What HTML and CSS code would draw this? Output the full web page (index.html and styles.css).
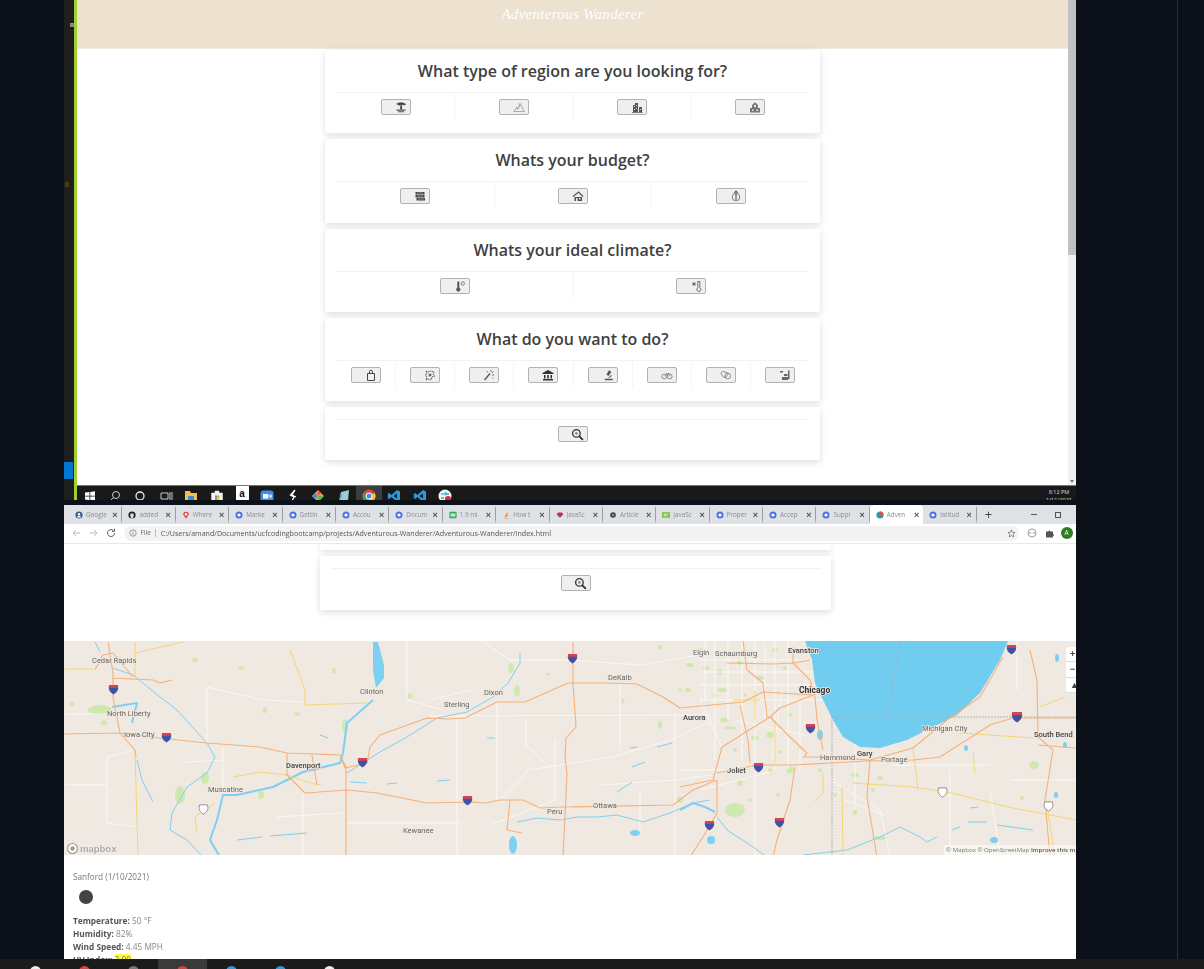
FILE: index.html
```html
<!DOCTYPE html>
<html lang="en">
<head>
<meta charset="utf-8">
<title>Adventerous Wanderer</title>
<link rel="stylesheet" href="styles.css">
</head>
<body>
<svg class="defs" width="0" height="0" aria-hidden="true">
  <defs>
    <symbol id="i-shield" viewBox="0 0 10 10"><path d="M1 1h8c.6 3 .5 6-4 8.500C.5 7 .4 4 1 1z" fill="#3f51a8"/><path d="M1 1h8l.1 2.300H.9z" fill="#d9434f"/></symbol>
    <symbol id="i-us" viewBox="0 0 10 10"><path d="M1.500 .8h7c1 3 .8 6-3.500 8.400C.7 6.800.5 3.800 1.500 .8z" fill="#fff" stroke="#777" stroke-width=".7"/></symbol>
    <symbol id="i-blue" viewBox="0 0 10 10"><circle cx="5" cy="5" r="4.400" fill="#4f6ee8"/><circle cx="5" cy="5" r="2" fill="#fff"/></symbol>
  </defs>
</svg>
<div class="screen">
  <div class="gutter-left"></div>
  <main class="stack">

    <section class="win-top">
      <div class="strip">
        <span class="strip-tick"></span>
        <span class="strip-dot"></span>
        <span class="strip-blue"></span>
      </div>
      <div class="green"></div>
      <div class="top-col">
        <div class="top-view">
          <div class="top-page">
            <header class="hero"><p class="brand">Adventerous Wanderer</p></header>
            <div class="quiz">
              <div class="card">
                <h2>What type of region are you looking for?</h2>
                <div class="row">
                  <div class="cell"><button class="btn" type="button"><svg class="ico" viewBox="0 0 12 12"><path d="M1 3.200C3 .8 9 .8 11 3.200L9.300 4.500 8 3.600 6.800 4.800 5.500 3.800 4 4.700 2.700 3.600zM5.200 4.500h1.500L7.300 8.500H5.200z" fill="#444"/><path d="M1.500 8.500h9v1.300h-9zM3 10.300h6v1H3z" fill="#555"/></svg></button></div>
                  <div class="cell"><button class="btn" type="button"><svg class="ico" viewBox="0 0 12 12"><path d="M.8 10.500 4 6l1.200 1.500L7 2.500l4.200 8zM7 2.500 6.500 6M4 6l.5 3" fill="none" stroke="#999" stroke-width=".8"/></svg></button></div>
                  <div class="cell"><button class="btn" type="button"><svg class="ico" viewBox="0 0 12 12"><path d="M2 11V4h2V2h3v9zM8 11V6h3v5zM1 11h10.500v.8H1z" fill="#555"/><path d="M3 5h1v1H3zM5 4h1v1H5zM3 8h1v1H3zM5 7h1v1H5zM9 8h1v1H9z" fill="#ddd"/></svg></button></div>
                  <div class="cell"><button class="btn" type="button"><svg class="ico" viewBox="0 0 12 12"><path d="M6 1.200 9 4v3H3V4zM1 7h10v4.500H1z" fill="#777"/><path d="M5 4h2v2H5zM3 8.500h1.500V10H3zM7.500 8.500H9V10H7.500z" fill="#eee"/></svg></button></div>
                </div>
              </div>
              <div class="card">
                <h2>Whats your budget?</h2>
                <div class="row">
                  <div class="cell"><button class="btn" type="button"><svg class="ico" viewBox="0 0 12 12"><path d="M1.500 2h9v2.500h-9zM1.500 5h9v2.500h-9zM2.500 8h8.500v2.500H2.500z" fill="#444"/><path d="M3 3h6M3 6h6M4 9h6" stroke="#ccc" stroke-width=".5"/></svg></button></div>
                  <div class="cell"><button class="btn" type="button"><svg class="ico" viewBox="0 0 12 12"><path d="M1 6.500 6.500 2 11 6.500" fill="none" stroke="#555" stroke-width="1.200"/><path d="M2.500 7h7.500v4H2.500z" fill="#555"/><path d="M4 8h1.500v3H4zM7 8h1.500v1.500H7z" fill="#eee"/></svg></button></div>
                  <div class="cell"><button class="btn" type="button"><svg class="ico" viewBox="0 0 12 12"><circle cx="6" cy="7" r="3.800" fill="none" stroke="#777" stroke-width=".9"/><path d="M6 1v9M4 2.800 6 .8l2 2" fill="none" stroke="#444" stroke-width="1"/></svg></button></div>
                </div>
              </div>
              <div class="card">
                <h2>Whats your ideal climate?</h2>
                <div class="row">
                  <div class="cell"><button class="btn" type="button"><svg class="ico" viewBox="0 0 12 12"><path d="M3.300 1.500h2v6.300a2 2 0 1 1-2 0z" fill="#555"/><circle cx="8.800" cy="3.500" r="1.700" fill="none" stroke="#666" stroke-width=".8"/></svg></button></div>
                  <div class="cell"><button class="btn" type="button"><svg class="ico" viewBox="0 0 12 12"><path d="M2 4h4M4 2v4M2.600 2.600l2.800 2.800M5.400 2.600 2.600 5.400" stroke="#555" stroke-width=".7"/><path d="M7.800 1.500h2v6.300a2 2 0 1 1-2 0z" fill="none" stroke="#555" stroke-width=".8"/></svg></button></div>
                </div>
              </div>
              <div class="card">
                <h2>What do you want to do?</h2>
                <div class="row">
                  <div class="cell"><button class="btn" type="button"><svg class="ico" viewBox="0 0 12 12"><path d="M2.500 4.500h7v7h-7zM4.500 4.500V2.800a1.500 1.500 0 0 1 3 0v1.700" fill="none" stroke="#333" stroke-width=".9"/></svg></button></div>
                  <div class="cell"><button class="btn" type="button"><svg class="ico" viewBox="0 0 12 12"><path d="M2 2l2 1 3-1 3 1-1 2 2 2-3 1-1 3-3-1-2 1 1-3-2-2 2-1z" fill="none" stroke="#555" stroke-width="1" stroke-dasharray="1.500 .7"/><circle cx="6" cy="6" r="1.500" fill="#666"/></svg></button></div>
                  <div class="cell"><button class="btn" type="button"><svg class="ico" viewBox="0 0 12 12"><path d="M1.500 11 7 4.500" stroke="#555" stroke-width="1.300"/><path d="M8 1v2M10.500 2.500 9 4M11 6H9M4 2l.8 1.500M9.500 8.500l.8 1" stroke="#666" stroke-width=".9"/></svg></button></div>
                  <div class="cell"><button class="btn" type="button"><svg class="ico" viewBox="0 0 12 12"><path d="M6 1 11.500 4v1H.5V4zM2 6h1.500v3.500H2zM5.200 6h1.600v3.500H5.200zM8.500 6H10v3.500H8.500zM1 10h10v1.500H1z" fill="#333"/></svg></button></div>
                  <div class="cell"><button class="btn" type="button"><svg class="ico" viewBox="0 0 12 12"><path d="M7 1.500 9 3 6.500 6.800 4.800 5.500zM3 11h7.500v-1H3zM6.500 8.500c2 0 3-1 3-2.500" fill="#555" stroke="#555" stroke-width=".5"/></svg></button></div>
                  <div class="cell"><button class="btn" type="button"><svg class="ico" viewBox="0 0 12 12"><circle cx="3.300" cy="7.500" r="2.400" fill="none" stroke="#666" stroke-width=".7"/><circle cx="8.700" cy="7.500" r="2.400" fill="none" stroke="#666" stroke-width=".7"/><path d="M3.300 7.500 5.500 4.500H8l.7 3M5.500 4.500l1 3" fill="none" stroke="#666" stroke-width=".6"/></svg></button></div>
                  <div class="cell"><button class="btn" type="button"><svg class="ico" viewBox="0 0 12 12"><path d="M1 4.500a2.200 2.200 0 0 1 4-1.200 2.200 2.200 0 0 1 3 2L5 9 2 6.500z" fill="none" stroke="#666" stroke-width=".7"/><circle cx="7.800" cy="7" r="2.800" fill="none" stroke="#666" stroke-width=".7"/></svg></button></div>
                  <div class="cell"><button class="btn" type="button"><svg class="ico" viewBox="0 0 12 12"><path d="M1 2h3v1.500H1zM9 1.500h1.500V10H9zM5 5h3.500v2H5zM3 8h6v3H3z" fill="#666"/></svg></button></div>
                </div>
              </div>
              <div class="card card-go">
                <button class="btn" type="button"><svg class="ico ico-go" viewBox="0 0 12 12"><circle cx="5" cy="5" r="3.500" fill="none" stroke="#333" stroke-width="1.200"/><circle cx="5" cy="5" r="1.200" fill="#888"/><path d="M7.500 7.500 11 11" stroke="#333" stroke-width="1.800"/></svg></button>
              </div>
            </div>
          </div>
          <div class="scroll"><span class="thumb"></span><span class="scroll-arrow"></span></div>
        </div>
        <footer class="taskbar">
          <span class="tb"><svg viewBox="0 0 14 14"><path d="M2 3.500 6.500 3v3.700H2zM7.300 3 12 2.300v4.400H7.300zM2 7.500h4.500v3.700L2 10.500zM7.300 7.500H12v4.400l-4.700-.7z" fill="#fff"/></svg></span>
          <span class="tb"><svg viewBox="0 0 14 14"><circle cx="8" cy="6" r="3.500" fill="none" stroke="#ccc"/><path d="M5.500 8.500 2 12" stroke="#ccc"/></svg></span>
          <span class="tb"><svg viewBox="0 0 14 14"><circle cx="7" cy="7" r="4" fill="none" stroke="#eee" stroke-width="1.300"/></svg></span>
          <span class="tb"><svg viewBox="0 0 14 14"><path d="M2 4h7v6H2zM11 3v8M13 3v8" fill="none" stroke="#ccc"/></svg></span>
          <span class="tb"><svg viewBox="0 0 14 14"><path d="M1 2h5l1 2h6v9H1z" fill="#f1c04a"/><path d="M4 7h6v4H4z" fill="#3a8fd0"/></svg></span>
          <span class="tb"><svg viewBox="0 0 14 14"><path d="M1.500 4h11v10h-11zM5 4V2h4v2" fill="#f2f2f2" stroke="#f2f2f2" stroke-width=".5"/><path d="M5 6.500h2v2H5z" fill="#e2543a"/><path d="M7.300 6.500h2v2h-2z" fill="#7cb62f"/><path d="M5 8.800h2v2H5z" fill="#2d9be0"/><path d="M7.300 8.800h2v2h-2z" fill="#f4b400"/></svg></span>
          <span class="tb tb-amazon">a</span>
          <span class="tb"><svg viewBox="0 0 14 14"><rect x=".5" y="1.500" width="13" height="12" rx="3" fill="#3d8df5"/><path d="M3 5h5.500v4.500H3zM9 7l2.500-2v4.500z" fill="#fff"/></svg></span>
          <span class="tb"><svg viewBox="0 0 14 14"><path d="M9 1 4.500 6 8 8l-3 6M9 1 6 6l4 2" fill="none" stroke="#fff" stroke-width="1.300"/></svg></span>
          <span class="tb"><svg viewBox="0 0 14 14"><path d="M7 1 13 7l-6 6-6-6z" fill="#e8a13a"/><path d="M7 1 10 4 7 7z" fill="#e5533d"/><path d="M1 7l3-3 3 3-3 3z" fill="#4c8be0"/><path d="M7 7h6l-6 6z" fill="#69b345"/></svg></span>
          <span class="tb"><svg viewBox="0 0 14 14"><path d="M4 3 12 1l-1 11-9 1z" fill="#9ccbd6"/><path d="M4 3 2 13l3-6z" fill="#6fa6b4"/></svg></span>
          <span class="tb tb-on"><svg viewBox="0 0 14 14"><circle cx="7" cy="7" r="6.500" fill="#dd4b3e"/><path d="M7 7 1.500 3.800A6.500 6.500 0 0 0 7 13.500z" fill="#3aa757"/><path d="M7 7l5.700-3A6.500 6.500 0 0 1 7 13.500z" fill="#f5c431"/><circle cx="7" cy="7" r="3" fill="#4285f4" stroke="#fff"/></svg></span>
          <span class="tb"><svg viewBox="0 0 14 14"><path d="M10 1 4.500 6 2 4 .8 5v4L2 10l2.500-2 5.500 5 3-1.500v-9zM10 4.500v5L6.500 7z" fill="#2a9ae0"/></svg></span>
          <span class="tb"><svg viewBox="0 0 14 14"><path d="M10 1 4.500 6 2 4 .8 5v4L2 10l2.500-2 5.500 5 3-1.500v-9zM10 4.500v5L6.500 7z" fill="#2a9ae0"/></svg></span>
          <span class="tb"><svg viewBox="0 0 14 14"><circle cx="7" cy="7" r="6.500" fill="#f4f4f4"/><path d="M3 5h3.500M7.500 3v3.500" stroke="#36c5f0" stroke-width="1.600"/><path d="M11 5H7.500M3 9h3" stroke="#2eb67d" stroke-width="1.600"/><circle cx="10" cy="10" r="3" fill="#d9264a"/></svg></span>
          <div class="clock"><span>8:12 PM</span><span>1/11/2021</span></div>
        </footer>
      </div>
    </section>

    <section class="win-bottom">
      <div class="tabs">
        <div class="tab"><svg class="fav" viewBox="0 0 10 10"><circle cx="5" cy="5" r="4.500" fill="#3b5b92"/><circle cx="5" cy="4" r="1.500" fill="#fff"/><path d="M2.500 8a2.500 2 0 0 1 5 0" fill="#fff"/></svg><span class="tab-t">Google</span><span class="tab-x">×</span></div>
        <div class="tab"><svg class="fav" viewBox="0 0 10 10"><circle cx="5" cy="5" r="4.500" fill="#222"/><path d="M3.500 9V7C2.500 6 2.500 4 3.500 3h3c1 1 1 3 0 4v2" fill="#dee1e6"/></svg><span class="tab-t">added</span><span class="tab-x">×</span></div>
        <div class="tab"><svg class="fav" viewBox="0 0 10 10"><path d="M5 9.800 1.500 4.500a3.500 3.500 0 1 1 7 0z" fill="#e4473c"/><circle cx="5" cy="4" r="1.500" fill="#fff"/></svg><span class="tab-t">Where</span><span class="tab-x">×</span></div>
        <div class="tab"><svg class="fav"><use href="#i-blue"/></svg><span class="tab-t">Marke</span><span class="tab-x">×</span></div>
        <div class="tab"><svg class="fav"><use href="#i-blue"/></svg><span class="tab-t">Gettin</span><span class="tab-x">×</span></div>
        <div class="tab"><svg class="fav"><use href="#i-blue"/></svg><span class="tab-t">Accou</span><span class="tab-x">×</span></div>
        <div class="tab"><svg class="fav"><use href="#i-blue"/></svg><span class="tab-t">Docum</span><span class="tab-x">×</span></div>
        <div class="tab"><svg class="fav" viewBox="0 0 10 10"><rect x=".5" y="1" width="9" height="8" rx="1" fill="#3aa75c"/><path d="M2 3h6v4H2z" fill="#bfe8c9"/></svg><span class="tab-t">1.9 mi</span><span class="tab-x">×</span></div>
        <div class="tab"><svg class="fav" viewBox="0 0 10 10"><path d="M7 .8 3 7.500h4zM2 9h6v.8H2z" fill="#e3984f"/></svg><span class="tab-t">How t</span><span class="tab-x">×</span></div>
        <div class="tab"><svg class="fav" viewBox="0 0 10 10"><path d="M5 8.500.8 4.500 2.500 2h5l1.700 2.500z" fill="#c2334d"/></svg><span class="tab-t">JavaSc</span><span class="tab-x">×</span></div>
        <div class="tab"><svg class="fav" viewBox="0 0 10 10"><circle cx="5" cy="5" r="3.500" fill="#444"/><circle cx="5" cy="5" r="1.300" fill="#aaa"/></svg><span class="tab-t">Article</span><span class="tab-x">×</span></div>
        <div class="tab"><svg class="fav" viewBox="0 0 10 10"><rect y="1.500" width="10" height="7" fill="#7cc243"/><path d="M2 3.500h6v1H2zM2 5.500h4v1H2z" fill="#fff"/></svg><span class="tab-t">JavaSc</span><span class="tab-x">×</span></div>
        <div class="tab"><svg class="fav"><use href="#i-blue"/></svg><span class="tab-t">Proper</span><span class="tab-x">×</span></div>
        <div class="tab"><svg class="fav"><use href="#i-blue"/></svg><span class="tab-t">Accep</span><span class="tab-x">×</span></div>
        <div class="tab"><svg class="fav"><use href="#i-blue"/></svg><span class="tab-t">Suppl</span><span class="tab-x">×</span></div>
        <div class="tab tab-on"><svg class="fav" viewBox="0 0 10 10"><circle cx="5" cy="5" r="4.500" fill="#2c9c9c"/><path d="M5 .5A4.500 4.500 0 0 1 9.500 5L5 5z" fill="#d9534f"/></svg><span class="tab-t">Adven</span><span class="tab-x">×</span></div>
        <div class="tab"><svg class="fav"><use href="#i-blue"/></svg><span class="tab-t">latitud</span><span class="tab-x">×</span></div>
        <span class="tab-new">+</span>
        <span class="win-min"></span>
        <span class="win-max"></span>
      </div>
      <div class="toolbar">
        <svg class="nav nav-off" viewBox="0 0 10 10"><path d="M9 5H2M5 2 2 5l3 3" fill="none" stroke="currentColor"/></svg>
        <svg class="nav nav-off" viewBox="0 0 10 10"><path d="M1 5h7M5 2l3 3-3 3" fill="none" stroke="currentColor"/></svg>
        <svg class="nav" viewBox="0 0 10 10"><path d="M8.500 5A3.500 3.500 0 1 1 7.300 2.400M8.500 .8v2.500H6" fill="none" stroke="currentColor"/></svg>
        <div class="omni">
          <svg class="omni-i" viewBox="0 0 10 10"><circle cx="5" cy="5" r="4" fill="none" stroke="#666" stroke-width=".8"/><path d="M5 4.500V7M5 3v.8" stroke="#666"/></svg>
          <span class="omni-file">File</span>
          <span class="omni-url">C:/Users/amand/Documents/ucfcodingbootcamp/projects/Adventurous-Wanderer/Adventurous-Wanderer/index.html</span>
          <svg class="omni-star" viewBox="0 0 10 10"><path d="M5 1l1.200 2.700 2.800.3-2.100 1.900.6 2.900L5 7.300 2.500 8.800l.6-2.900L1 4l2.800-.3z" fill="none" stroke="#666" stroke-width=".8"/></svg>
        </div>
        <svg class="tool" viewBox="0 0 10 10"><circle cx="5" cy="5" r="4" fill="none" stroke="#888" stroke-width=".8"/><path d="M3 4v2M7 4v2" stroke="#888"/></svg>
        <svg class="tool" viewBox="0 0 10 10"><path d="M1 3.500h2.500a1 1 0 0 1 2 0H8v2.500a1 1 0 0 1 0 2V9.500H1z" fill="#555"/></svg>
        <span class="avatar">A</span>
      </div>
      <div class="page">
        <div class="stub"></div>
        <div class="card-wide"><button class="btn" type="button"><svg class="ico ico-go" viewBox="0 0 12 12"><circle cx="5" cy="5" r="3.500" fill="none" stroke="#333" stroke-width="1.200"/><circle cx="5" cy="5" r="1.200" fill="#888"/><path d="M7.500 7.500 11 11" stroke="#333" stroke-width="1.800"/></svg></button></div>
        <div class="map">
          <svg class="map-art" viewBox="64 641 1012 214" preserveAspectRatio="none">
            <rect x="64" y="641" width="1012" height="214" fill="#efe9e1"/>
            <g fill="#cfe8b0">
              <ellipse cx="100" cy="710" rx="12" ry="5"/><ellipse cx="104" cy="723" rx="3" ry="2.500"/><ellipse cx="72" cy="704" rx="3" ry="2"/><ellipse cx="195" cy="660" rx="3" ry="2"/><ellipse cx="241" cy="668" rx="3" ry="2"/><ellipse cx="265" cy="710" rx="2" ry="3"/><ellipse cx="297" cy="714" rx="3" ry="2"/><ellipse cx="334" cy="671" rx="2" ry="3"/><ellipse cx="345" cy="726" rx="3" ry="7"/><ellipse cx="410" cy="696" rx="3" ry="2.500"/><ellipse cx="261" cy="795" rx="3" ry="4"/><ellipse cx="180" cy="795" rx="5" ry="9"/><ellipse cx="205" cy="778" rx="4" ry="6"/><ellipse cx="511" cy="668" rx="3" ry="5"/><ellipse cx="517" cy="691" rx="3" ry="6"/><ellipse cx="548" cy="674" rx="2" ry="1.500"/><ellipse cx="660" cy="647" rx="2" ry="2.500"/><ellipse cx="660" cy="725" rx="2" ry="4"/><ellipse cx="623" cy="701" rx="1.500" ry="2.500"/><ellipse cx="724" cy="720" rx="4" ry="2.500"/><ellipse cx="730" cy="728" rx="6" ry="1.500"/><ellipse cx="690" cy="665" rx="4" ry="2"/><ellipse cx="706" cy="668" rx="3" ry="2"/><ellipse cx="688" cy="690" rx="3" ry="2"/><ellipse cx="720" cy="672" rx="3" ry="3"/><ellipse cx="722" cy="690" rx="5" ry="2"/><ellipse cx="740" cy="662" rx="3" ry="3"/><ellipse cx="760" cy="678" rx="4" ry="2"/><ellipse cx="775" cy="650" rx="3" ry="2"/><ellipse cx="770" cy="735" rx="4" ry="3"/><ellipse cx="755" cy="738" rx="4" ry="2"/><ellipse cx="790" cy="770" rx="4" ry="3"/><ellipse cx="740" cy="783" rx="3" ry="3"/><ellipse cx="735" cy="810" rx="10" ry="7"/><ellipse cx="680" cy="800" rx="3" ry="3"/><ellipse cx="778" cy="795" rx="2" ry="2"/><ellipse cx="855" cy="775" rx="4" ry="2"/><ellipse cx="880" cy="778" rx="3" ry="2"/><ellipse cx="873" cy="790" rx="2" ry="2"/><ellipse cx="1034" cy="765" rx="5" ry="4"/><ellipse cx="835" cy="795" rx="2" ry="2"/><ellipse cx="855" cy="812" rx="2" ry="3"/><ellipse cx="1022" cy="798" rx="2" ry="2"/><ellipse cx="880" cy="838" rx="8" ry="2"/><ellipse cx="700" cy="650" rx="2" ry="2"/><ellipse cx="715" cy="695" rx="2" ry="1.500"/><ellipse cx="745" cy="695" rx="2" ry="1.500"/><ellipse cx="785" cy="668" rx="2" ry="2"/><ellipse cx="790" cy="715" rx="3" ry="1.500"/><ellipse cx="800" cy="748" rx="2" ry="2"/><ellipse cx="735" cy="750" rx="2" ry="2"/><ellipse cx="780" cy="752" rx="2" ry="2"/><ellipse cx="770" cy="770" rx="2" ry="2"/><ellipse cx="820" cy="770" rx="2" ry="2"/><ellipse cx="750" cy="800" rx="2" ry="1.500"/><ellipse cx="680" cy="690" rx="2" ry="2"/>
            </g>
            <g fill="none" stroke="#faf8f4" stroke-width="1">
              <path d="M207 687V743M207 687 263 700 305 702M65 714H107M107 757 133 750M185 762 223 760M223 747V790M277 817 343 813M303 793V857M347 823H460M107 757V823L137 827M65 785H107M407 640V700L443 710M430 716 710 715M497 702V800M457 717V855M430 700 470 690M526 720V745L553 770M528 770 612 757 670 740 710 722M528 770 520 780 500 800M555 740V800M620 684V750M675 716V855M430 640H480L510 660H570L640 665 700 655M600 785 675 780 710 775M640 790V830M555 800 490 825M705 640V700M722 747 700 700M755 640V860M765 645V720M782 690 772 760M800 700V770M1017 640V690M855 740V810M950 770V855M990 790 1000 855M1010 780H1076M890 765H990M830 780 880 810 890 855M845 800 885 815M700 660H815M700 672H815M700 685H815M700 700H825M715 640V760M728 640V720M742 640V760M775 640V770M788 640V770M735 720 805 735M700 790 770 772M680 770H725" />
            </g>
            <path d="M805 641 812 660 815 683 823 700 833 720 843 737 860 747 880 748 907 740 933 727 957 715 980 693 1000 660 1008 641z" fill="#70cdf0"/>
            <path d="M900 641 887 717M832 717V855M832 717H1076" fill="none" stroke="#a9aeb5" stroke-width=".9" stroke-dasharray="2 1"/>
            <g fill="none" stroke="#7ed0f3" stroke-width="1">
              <path d="M113 668 133 675 160 697 177 710 207 743 215 757 207 773 187 787 172 813 170 830 187 840 203 857M95 642 100 652M137 760 142 780 153 802M347 773 380 752 407 737 437 718 467 712 493 697 508 683 520 663 520 653M350 782 367 783M387 784 397 783M437 781 450 780M487 738 495 738M320 735 328 738M517 822 537 818 560 820 577 817 597 817 617 815 643 822 670 813 693 803 710 800M630 748 637 747M632 767 645 762M657 747 672 743M617 792 632 782M970 808 978 807M968 822 987 822M997 825 1033 830M952 830 960 827M803 855 847 850 880 837 900 827 920 837 927 842 937 837M717 817 727 830 753 847 767 857M237 840 262 837M270 836 307 833"/>
            </g>
            <path class="river-main" d="M373 700 347 723 343 753 340 763 303 772 273 787 237 795 223 795 217 820 210 840 220 857M680 810 693 803 705 807 715 812M112 707 137 703 132 723"/>
            <g fill="#7ed0f3">
              <path d="M373 642h5l6 23v13l-8 10-3-18z"/>
              <ellipse cx="635" cy="833" rx="5" ry="3"/><ellipse cx="513" cy="845" rx="4" ry="9"/><ellipse cx="711" cy="840" rx="4" ry="4"/><ellipse cx="966" cy="748" rx="2" ry="3"/><ellipse cx="994" cy="840" rx="4" ry="3"/><ellipse cx="820" cy="735" rx="3" ry="5"/><ellipse cx="1057" cy="658" rx="2" ry="4"/><ellipse cx="1056" cy="795" rx="2" ry="3"/><ellipse cx="1065" cy="745" rx="2" ry="3"/>
            </g>
            <g fill="none" stroke="#f3d673" stroke-width="1">
              <path d="M290 650 305 690 305 705 367 703M135 642V677M135 653 183 642M65 669H93M135 750 138 857M233 777 260 772 287 775M197 833 195 817 215 803M853 783 913 787 947 792 1013 808 1076 820M960 733 1033 738M973 753 975 773M913 747 918 790M1048 812 1055 857M842 787 843 857M775 720V765M823 773V793L815 802M1040 707 1065 697M755 690V720M733 700H760M287 775 310 783 320 785"/>
            </g>
            <g fill="none" stroke="#f6b07a" stroke-width="1.100" stroke-linejoin="round">
              <path d="M64 734 120 733 160 738 207 743 260 747 287 753 340 755 345 768 367 763 370 747 380 735 427 718 447 719 465 718 497 702 525 702 568 683 607 683 637 684 663 697 680 708 743 702 763 692 813 695M287 753V775L305 793 347 790 377 793 427 803 473 802 485 803 500 800 523 800 540 808 563 807 673 805 693 790 717 780M312 755 317 785M340 755 346 767 346 857M108 642 113 673 113 697 120 733 135 750 136 757M95 670 103 655 113 653 133 677M113 678 153 680 160 683 172 680M573 642 573 683 576 727 566 738 565 757 567 773 563 857M510 800 507 830 522 833M743 641 747 670 763 683 767 717 773 718M727 663 773 664 793 663 810 660M793 647V663L810 680 815 697 817 720 823 750M680 787 713 780 722 747 770 717 790 737 807 753 803 758M740 705 748 740 750 763M717 780V813L703 837 690 857M717 773 757 765 793 765 867 761 913 760 940 757 990 725 1013 718M805 757 820 757 870 760 913 748 947 720 980 697 1003 657M813 695 780 708 770 717M795 767 790 800 777 840 773 857M870 760 867 797 877 857M1030 650 1037 680 1038 737 1053 750 1045 800 1050 857M1038 745 1076 748M1013 718H1076"/>
            </g>
            <g class="shield-set">
              <use href="#i-shield" x="108" y="684" width="11" height="11"/><use href="#i-shield" x="161" y="732" width="11" height="11"/><use href="#i-shield" x="357" y="757" width="11" height="11"/><use href="#i-shield" x="567" y="653" width="11" height="11"/><use href="#i-shield" x="462" y="795" width="11" height="11"/><use href="#i-shield" x="704" y="820" width="11" height="11"/><use href="#i-shield" x="774" y="817" width="11" height="11"/><use href="#i-shield" x="753" y="762" width="11" height="11"/><use href="#i-shield" x="805" y="723" width="11" height="11"/><use href="#i-shield" x="1006" y="644" width="11" height="11"/><use href="#i-shield" x="1007" y="711" width="20" height="12" preserveAspectRatio="none"/>
              <use href="#i-us" x="198" y="804" width="11" height="11"/><use href="#i-us" x="937" y="787" width="11" height="11"/><use href="#i-us" x="1043" y="801" width="11" height="11"/>
            </g>
            <g class="places">
              <text x="92" y="663">Cedar Rapids</text><text x="107" y="716">North Liberty</text><text x="124" y="737">Iowa City</text><text class="strong" x="286" y="768">Davenport</text><text x="208" y="792">Muscatine</text><text x="360" y="694">Clinton</text><text x="444" y="707">Sterling</text><text x="484" y="695">Dixon</text><text x="608" y="680">DeKalb</text><text x="693" y="655">Elgin</text><text x="715" y="656">Schaumburg</text><text class="strong" x="788" y="653">Evanston</text><text class="major" x="799" y="693">Chicago</text><text class="strong" x="683" y="720">Aurora</text><text class="strong" x="727" y="773">Joliet</text><text x="820" y="760">Hammond</text><text class="strong" x="857" y="756">Gary</text><text x="881" y="762">Portage</text><text x="922" y="731">Michigan City</text><text class="strong" x="1034" y="737">South Bend</text><text x="547" y="814">Peru</text><text x="593" y="808">Ottawa</text><text x="403" y="833">Kewanee</text>
            </g>
          </svg>
          <div class="map-logo"><svg class="map-logo-i" viewBox="0 0 10 10"><circle cx="5" cy="5" r="4.500" fill="#fff" stroke="#999"/><circle cx="5" cy="5" r="2" fill="#999"/></svg><span>mapbox</span></div>
          <div class="map-attr">© Mapbox © OpenStreetMap <b>Improve this map</b></div>
          <div class="map-ctrl"><span>+</span><span>−</span><span>▲</span></div>
        </div>
        <div class="weather">
          <p class="w-city">Sanford (1/10/2021)</p>
          <div class="w-icon"></div>
          <p class="w-line"><b>Temperature:</b> 50 °F</p>
          <p class="w-line"><b>Humidity:</b> 82%</p>
          <p class="w-line"><b>Wind Speed:</b> 4.45 MPH</p>
          <p class="w-line"><b>UV Index:</b> <mark>2.00</mark></p>
        </div>
      </div>
    </section>
  </main>
  <div class="gutter-right"></div>
</div>
<div class="tray">
  <span class="tr-i"><i class="t-white"></i></span>
  <span class="tr-i"><i class="t-red"></i></span>
  <span class="tr-i"><i class="t-grey"></i></span>
  <span class="tr-i tr-on"><i class="t-chrome"></i></span>
  <span class="tr-i"><i class="t-blue"></i></span>
  <span class="tr-i"><i class="t-blue"></i></span>
  <span class="tr-i"><i class="t-white"></i></span>
</div>
</body>
</html>
```

FILE: styles.css
```css
* { box-sizing: border-box; }
html, body { margin: 0; height: 100%; }
body {
  width: 1204px;
  height: 969px;
  overflow: hidden;
  background: #0c1018;
  font-family: "Open Sans", "Liberation Sans", sans-serif;
  color: #444;
}
p, h2 { margin: 0; }
.defs { display: block; height: 0; }

.screen { display: flex; height: 959px; filter: blur(.4px); }
.gutter-left { width: 64px; flex: none; }
.gutter-right { width: 128px; flex: none; }
.gutter-right::before {
  content: "";
  display: block;
  width: 1px;
  height: 100%;
  margin-left: 101px;
  background: #2b303a;
}
.stack { width: 1012px; flex: none; display: flex; flex-direction: column; gap: 5px; }

/* Top window */
.win-top { display: flex; height: 500px; flex: none; }
.strip { width: 10px; flex: none; background: #1e1e1e; display: flex; flex-direction: column; }
.strip-tick { width: 4px; height: 4px; margin: 23px 0 0 6px; background: #888; }
.strip-dot { width: 4px; height: 5px; margin: 155px 0 0 1px; background: #4a3a18; }
.strip-blue { height: 17px; width: 9px; margin-top: 275px; background: #0078d4; }
.green { width: 3px; flex: none; background: #9ed02f; }
.top-col { flex: 1; min-width: 0; display: flex; flex-direction: column; }
.top-view { height: 485px; flex: none; display: flex; background: #fff; overflow: hidden; }
.top-page { flex: 1; min-width: 0; }
.hero { height: 48px; background: #ede1d0; box-shadow: 0 1px 0 #f3ece1; text-align: center; }
.brand {
  padding-top: 4px;
  font: italic 15px/20px "Liberation Serif", serif;
  letter-spacing: .3px;
  color: #fff;
}
.quiz { display: flex; flex-direction: column; align-items: center; gap: 6px; padding-top: 2px; }
.card {
  width: 495px;
  height: 83.3px;
  padding: 0 11px;
  background: #fff;
  border-radius: 2px;
  box-shadow: 0 2px 7px rgba(0, 0, 0, .14);
}
.card h2 {
  height: 42px;
  padding-top: 10px;
  font-size: 16px;
  line-height: 23px;
  font-weight: 600;
  text-align: center;
  color: #404040;
}
.row { display: flex; border-top: 1px solid #f2f2f2; height: 28px; }
.cell {
  flex: 1 1 0;
  min-width: 0;
  display: flex;
  justify-content: center;
  padding-top: 6px;
  border-left: 1px solid #f5f5f5;
}
.cell:first-child { border-left-color: transparent; }
.btn {
  width: 30px;
  height: 16px;
  padding: 0 3px 0 0;
  display: flex;
  align-items: center;
  justify-content: flex-end;
  flex: none;
  background: #efefef;
  border: 1px solid #b2b2b2;
  border-radius: 2px;
}
.ico { width: 12px; height: 12px; display: block; }
.ico-go { width: 13px; height: 13px; }
.card-go {
  height: 53px;
  padding-top: 12px;
  display: flex;
  flex-direction: column;
  align-items: center;
}
.card-go::before { content: ""; width: 473px; height: 1px; background: #f2f2f2; margin-bottom: 6px; flex: none; }
.scroll { width: 8px; flex: none; background: #f1f1f1; display: flex; flex-direction: column; }
.thumb { height: 255px; background: #c1c1c1; }
.scroll-arrow {
  width: 0;
  height: 0;
  margin: auto 0 2px 2px;
  border: 2px solid transparent;
  border-top: 3px solid #777;
  border-bottom: 0;
}
.taskbar {
  height: 15px;
  flex: none;
  display: flex;
  align-items: flex-start;
  overflow: hidden;
  background: #191919;
  border-top: 1px solid #777;
}
.tb {
  width: 25.4px;
  height: 15px;
  flex: none;
  display: flex;
  justify-content: center;
  padding-top: 3px;
}
.tb svg { width: 14px; height: 14px; flex: none; }
.tb-on { background: #3d3d3d; }
.tb-amazon {
  width: 13px;
  height: 15px;
  margin: 0 6.200px;
  padding: 3px 0 0;
  background: #fff;
  color: #111;
  font: 700 10px/9px "Liberation Sans", sans-serif;
  text-align: center;
}
.clock {
  margin-left: auto;
  padding: 2px 4px 0 0;
  display: flex;
  flex-direction: column;
  align-items: center;
  font-size: 5.500px;
  line-height: 8px;
  color: #ddd;
}

/* Bottom window */
.win-bottom { height: 454px; flex: none; display: flex; flex-direction: column; background: #fff; overflow: hidden; }
.tabs { height: 19px; flex: none; display: flex; align-items: center; padding-left: 5px; background: #dee1e6; }
.tab {
  width: 53.4px;
  height: 19px;
  flex: none;
  display: flex;
  align-items: center;
  padding: 0 4px 0 6px;
  border-right: 1px solid #9a9da3;
  background-clip: padding-box;
  border-top: 4px solid #dee1e6;
  border-bottom: 4px solid #dee1e6;
}
.tab-on { background: #fff; border: 0; border-radius: 4px 4px 0 0; }
.fav { width: 8px; height: 8px; flex: none; }
.tab-t {
  width: 22px;
  margin-left: 3px;
  flex: none;
  overflow: hidden;
  white-space: nowrap;
  font-size: 6.300px;
  line-height: 10px;
  color: #8a8d92;
}
.tab-x { margin-left: auto; font: 700 9px/10px "Liberation Sans", sans-serif; color: #555; }
.tab-new { margin-left: 8px; font-size: 13px; line-height: 15px; color: #444; }
.win-min { width: 6px; height: 1px; margin-left: 39px; background: #555; }
.win-max { width: 6px; height: 6px; margin-left: 18px; border: 1px solid #555; }
.toolbar {
  height: 20px;
  flex: none;
  display: flex;
  align-items: center;
  padding: 0 3px 1px 7px;
  background: #fff;
  border-bottom: 1px solid #e9e9e9;
}
.nav { width: 10px; height: 10px; margin-right: 7.500px; color: #555; flex: none; }
.nav-off { color: #bbb; }
.omni {
  width: 895px;
  height: 15px;
  padding: 0 3px 0 5px;
  flex: none;
  display: flex;
  align-items: center;
  background: #f1f3f4;
  border-radius: 8px;
}
.omni-i { width: 8px; height: 8px; flex: none; }
.omni-file {
  margin-left: 4px;
  padding-right: 4px;
  border-right: 1px solid #bbb;
  font-size: 6.500px;
  line-height: 8px;
  color: #666;
}
.omni-url {
  margin-left: 5px;
  font-size: 7.100px;
  white-space: nowrap;
  color: #555;
}
.omni-star { width: 9px; height: 9px; margin-left: auto; flex: none; }
.tool { width: 10px; height: 10px; margin-left: 8px; flex: none; }
.avatar {
  width: 12px;
  height: 12px;
  margin-left: 6px;
  flex: none;
  border-radius: 50%;
  background: #2e7d25;
  color: #fff;
  font-size: 6.500px;
  line-height: 12px;
  text-align: center;
}

.page { flex: 1; min-height: 0; overflow: hidden; display: flex; flex-direction: column; }
.stub {
  width: 511px;
  height: 6px;
  margin-left: 256px;
  flex: none;
  background: #fff;
  box-shadow: 0 2px 6px rgba(0, 0, 0, .14);
}
.card-wide {
  width: 511px;
  height: 54px;
  margin: 6px 0 0 256px;
  flex: none;
  display: flex;
  flex-direction: column;
  align-items: center;
  padding-top: 12px;
  background: #fff;
  box-shadow: 0 2px 7px rgba(0, 0, 0, .14);
}
.card-wide::before { content: ""; width: 490px; height: 1px; margin-bottom: 6px; background: #f2f2f2; flex: none; }
.map { position: relative; height: 214px; margin-top: 31px; flex: none; overflow: hidden; }
.map-art { display: block; width: 1012px; height: 214px; }
.river-main { fill: none; stroke: #7ed0f3; stroke-width: 2; stroke-linejoin: round; }
.places text {
  font-family: "Roboto", "Liberation Sans", sans-serif;
  font-size: 7.500px;
  fill: #666;
  stroke: #efe9e1;
  stroke-width: 1.500px;
  paint-order: stroke;
}
.places .strong { fill: #444; font-weight: 500; }
.places .major { fill: #333; font-weight: 700; font-size: 8.500px; }
.map-logo {
  position: absolute;
  left: 3px;
  bottom: 1px;
  display: flex;
  align-items: center;
  gap: 2px;
  font: 700 9.500px/11px "Liberation Sans", sans-serif;
  color: #a8a8a8;
  text-shadow: 0 0 1px #fff, 0 0 1px #fff;
}
.map-logo-i { width: 11px; height: 11px; }
.map-attr {
  position: absolute;
  right: 0;
  bottom: 0;
  width: 132px;
  height: 10px;
  padding-left: 2px;
  overflow: hidden;
  white-space: nowrap;
  background: rgba(255, 255, 255, .55);
  font-size: 6.100px;
  line-height: 10px;
  color: #777;
}
.map-attr b { font-weight: 600; color: #555; }
.map-ctrl {
  position: absolute;
  top: 6px;
  left: 1002px;
  width: 14px;
  height: 46px;
  display: flex;
  flex-direction: column;
  background: #fff;
  border-radius: 3px;
  font: 700 9px/15px "Liberation Sans", sans-serif;
  color: #444;
}
.map-ctrl span { height: 15.300px; padding-left: 4px; overflow: hidden; border-bottom: 1px solid #ddd; }

.weather { padding: 16px 0 0 9px; flex: none; }
.w-city { font-size: 8.200px; line-height: 12px; color: #777; }
.w-icon { width: 14px; height: 14px; margin: 7px 0 0 6px; border-radius: 50%; background: #444; }
.w-line { font-size: 8.300px; line-height: 13px; color: #888; }
.w-icon + .w-line { margin-top: 10px; }
.w-line b { color: #555; font-weight: 700; }
.w-line mark { background: #ffff3b; color: #777; }

/* Bottom edge */
.tray {
  height: 10px;
  display: flex;
  padding-left: 11px;
  overflow: hidden;
  background: #1b1b1b;
  filter: blur(.4px);
}
.tr-i { width: 49px; height: 10px; flex: none; display: flex; justify-content: center; padding-top: 7px; }
.tr-on { background: #3a3a3a; }
.tr-i i { width: 11px; height: 11px; border-radius: 50%; }
.t-white { background: #ececec; }
.t-red { background: #d9443f; }
.t-grey { background: #777; }
.t-chrome { background: #d8423a; }
.t-blue { background: #2a9ae0; }
```
